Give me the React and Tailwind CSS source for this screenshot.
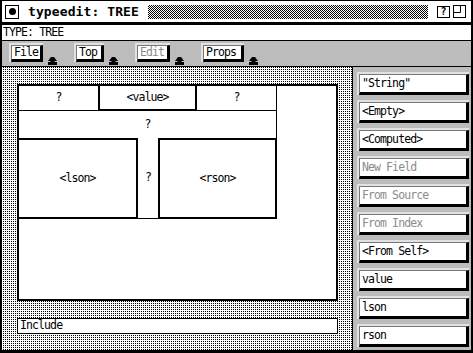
import React from 'react'

const rightItems = [
  { label: '"String"' },
  { label: '<Empty>' },
  { label: '<Computed>' },
  { label: 'New Field', off: true },
  { label: 'From Source', off: true },
  { label: 'From Index', off: true },
  { label: '<From Self>' },
  { label: 'value' },
  { label: 'lson' },
  { label: 'rson' },
]

const menus = [
  { label: 'File', w: 'w-[34px]' },
  { label: 'Top', w: 'w-[30px]' },
  { label: 'Edit', w: 'w-[35px]', off: true },
  { label: 'Props', w: 'w-[43px]' },
]

function Arrow() {
  return (
    <svg width="9" height="8" viewBox="0 0 9 8" className="mt-[14px] ml-[5px] shrink-0">
      <path d="M3 0h3l3 4H0z" fill="#000" />
      <rect x="2.5" y="4" width="4" height="1" fill="#000" />
      <rect x="0" y="5" width="9" height="3" fill="#000" />
    </svg>
  )
}

function Btn({ label, off, className = '' }) {
  return (
    <div className={`bg-[#e2e2e2] pt-[2px] pl-[2px] flex ${className}`}>
      <div className="flex-1 flex items-center bg-white border-l border-t border-[#777] border-r-[3px] border-b-[3px] border-r-black border-b-black pl-[2px]">
        <span className={off ? 'text-[#8c8c8c]' : 'text-black'}>{label}</span>
      </div>
    </div>
  )
}

export default function App() {
  return (
    <div className="w-[473px] h-[353px] flex flex-col bg-white border-t border-l-2 border-r-2 border-b-[3px] border-black overflow-hidden font-['DejaVu_Sans_Mono',monospace] text-[11.5px] tracking-[-0.9px] leading-none">
      {/* title bar */}
      <div className="h-[24px] shrink-0 flex items-center border-b-[3px] border-black">
        <div className="ml-[3px] w-[14px] h-[14px] border-[1.5px] border-black flex items-center justify-center">
          <div className="w-[7px] h-[7px] rounded-full bg-black" />
        </div>
        <span className="ml-[9px] font-bold text-[13px] tracking-[0.1px]">typeedit: TREE</span>
        <div className="ml-[9px] flex-1 h-[14px] bg-[repeating-conic-gradient(#000_0_25%,#fff_0_50%)] bg-[length:2px_2px]" />
        <div className="ml-[9px] w-[13px] h-[12px] border border-black flex items-center justify-center font-bold text-[10px] tracking-normal">?</div>
        <svg width="13" height="13" viewBox="0 0 13 13" className="ml-[3px] mr-[5px]">
          <rect x="0.5" y="0.5" width="12" height="12" fill="none" stroke="#000" />
          <path d="M7.5 0.5V7.5H0.5" fill="none" stroke="#000" />
        </svg>
      </div>

      {/* type row */}
      <div className="h-[16px] shrink-0 flex items-center border-b border-black pl-[1px]">TYPE: TREE</div>

      {/* menu bar */}
      <div className="h-[26px] shrink-0 flex items-start pt-[2px] pl-[7px] gap-[17px] bg-[#bcbcbc] border-b border-black">
        {menus.map(m => (
          <div key={m.label} className="flex">
            <Btn label={m.label} off={m.off} className={`${m.w} h-[19px]`} />
            <Arrow />
          </div>
        ))}
      </div>

      {/* body */}
      <div className="flex-1 flex min-h-0">
        <div className="flex-1 flex flex-col pt-[17px] pl-[15px] pr-[14px] bg-[conic-gradient(#000_0_25%,#fff_0)] bg-[length:2px_2px]">
          <div className="h-[217px] border-2 border-black bg-white">
            <div className="w-[258px] flex flex-col">
              <div className="h-[25px] flex">
                <div className="w-[79px] border-b border-black flex items-center justify-center">?</div>
                <div className="w-[99px] border-2 border-t-0 border-black flex items-center justify-center">&lt;value&gt;</div>
                <div className="w-[80px] border-b border-r border-black flex items-center justify-center">?</div>
              </div>
              <div className="h-[27px] border-r border-black flex items-center justify-center">?</div>
              <div className="h-[81px] flex">
                <div className="w-[119px] border-2 border-l-0 border-black flex items-center justify-center">&lt;lson&gt;</div>
                <div className="w-[20px] border-b border-black flex items-center justify-center">?</div>
                <div className="w-[119px] border-2 border-black flex items-center justify-center">&lt;rson&gt;</div>
              </div>
            </div>
          </div>
          <div className="mt-[17px] h-[16px] border border-black bg-white flex items-center pl-[2px]">Include</div>
        </div>
        <div className="w-[119px] shrink-0 border-l border-black bg-[#bcbcbc] pl-[4px] pr-[2px] pt-[5px] flex flex-col gap-[5px]">
          {rightItems.map(it => (
            <Btn key={it.label} label={it.label} off={it.off} className="h-[23px]" />
          ))}
        </div>
      </div>
    </div>
  )
}
